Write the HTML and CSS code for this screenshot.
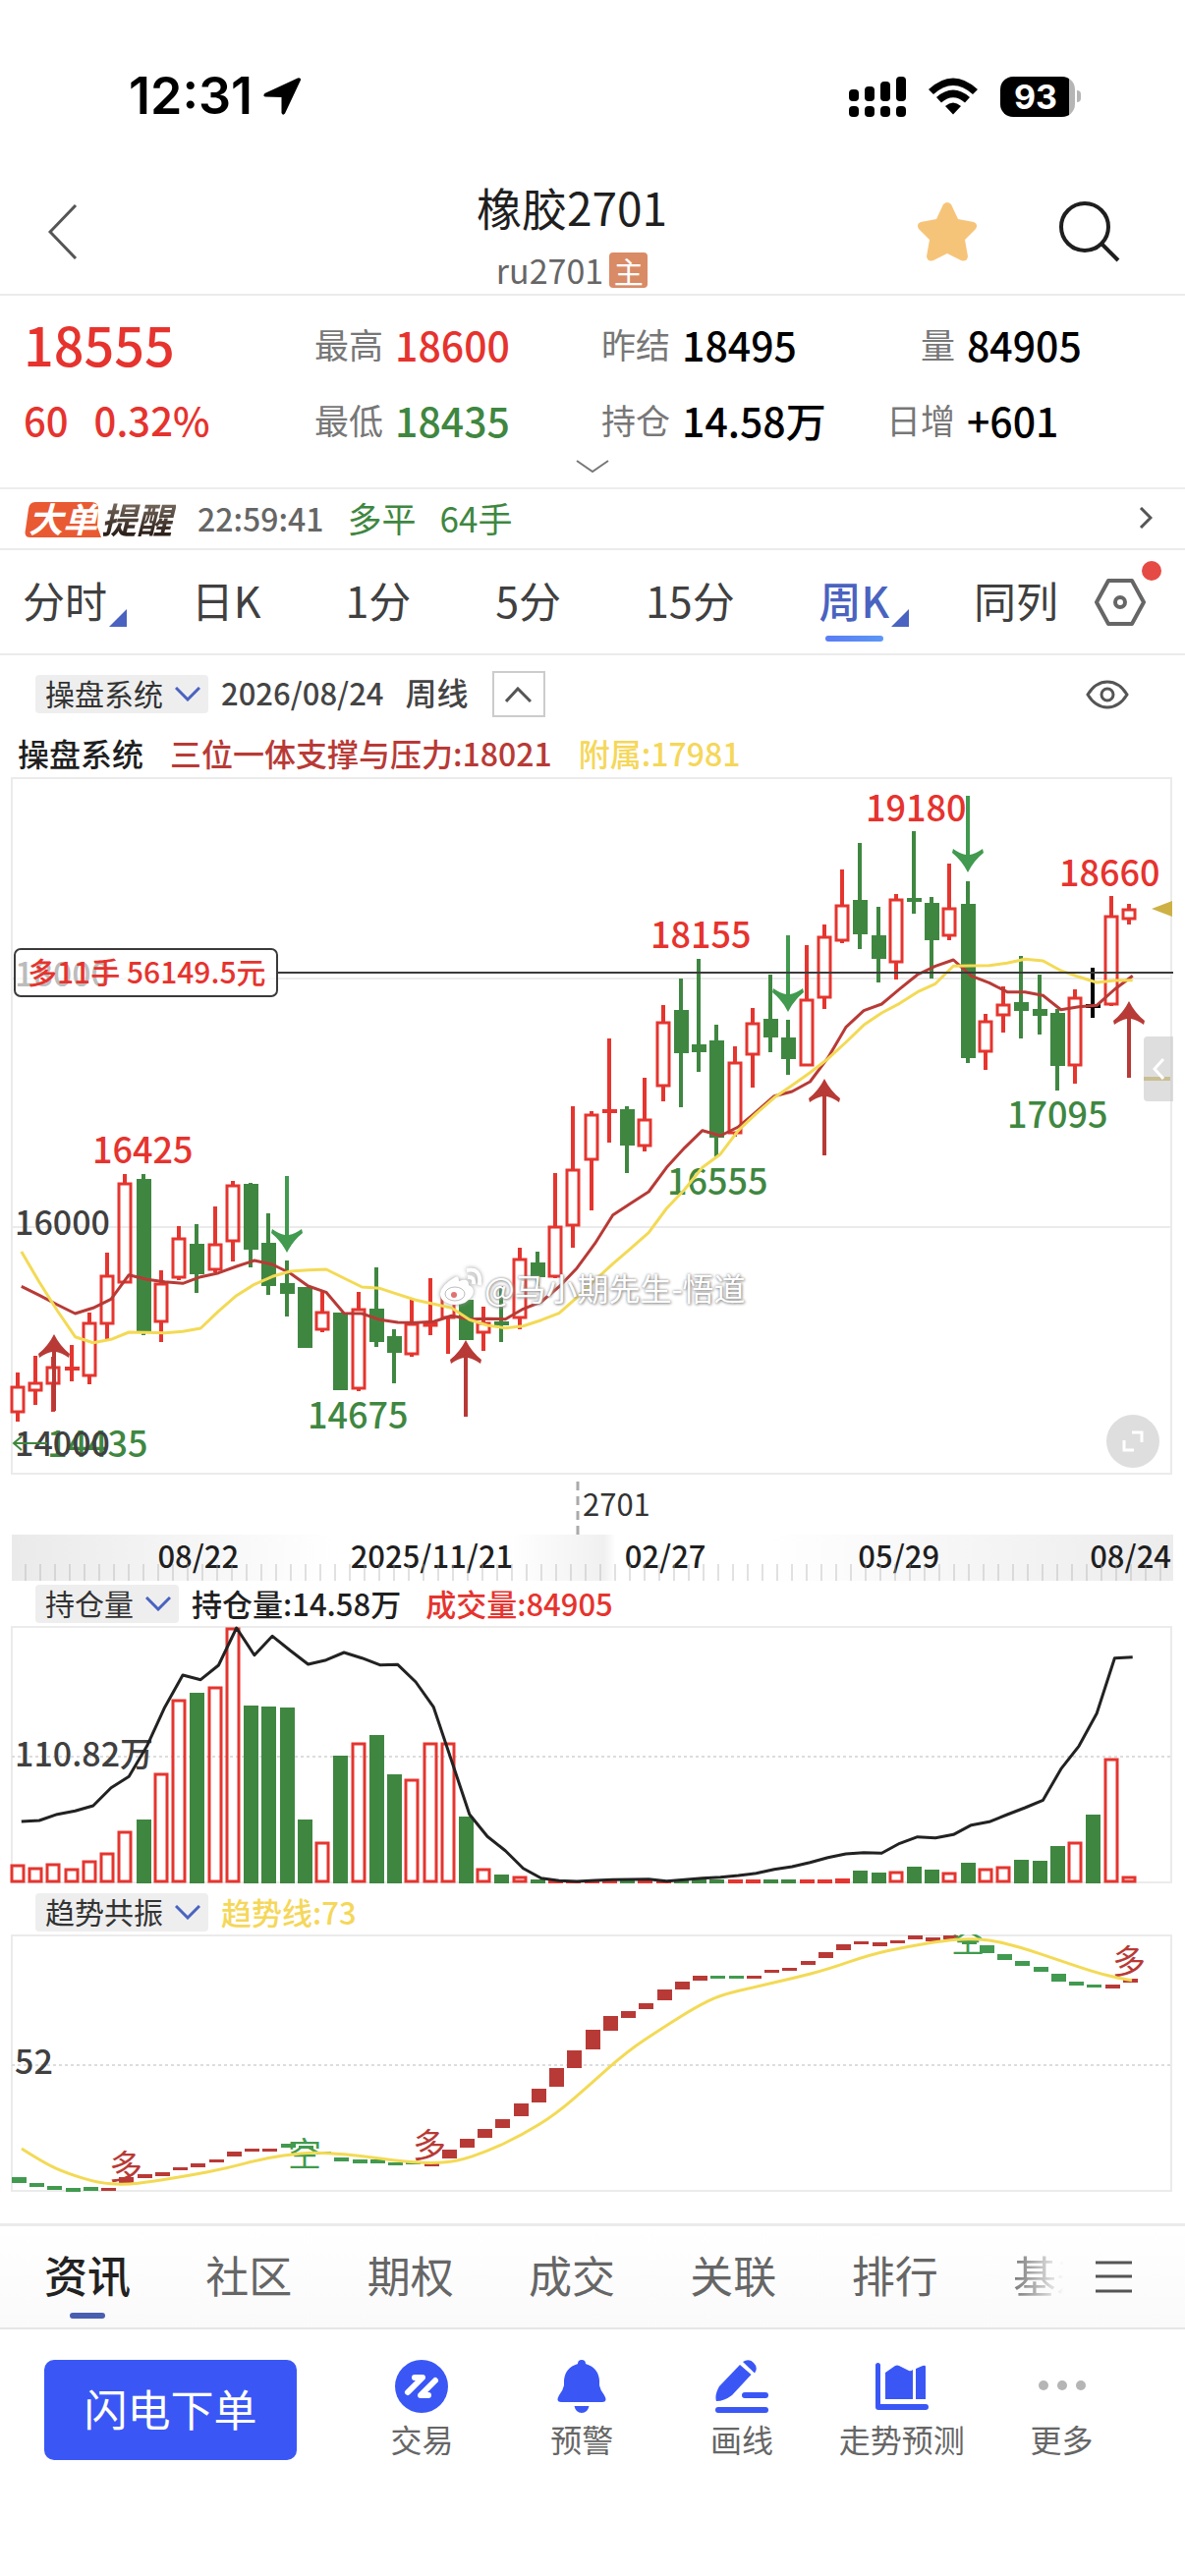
FILE: index.html
```html
<!DOCTYPE html>
<html lang="zh-CN">
<head>
<meta charset="utf-8">
<meta name="viewport" content="width=device-width, initial-scale=1">
<title>橡胶2701</title>
<link rel="stylesheet" href="styles.css">
</head>
<body>
<div class="status">
  <div class="status__left">
    <span class="status__time">12:31</span>
    <svg class="status__locate" width="40" height="40" viewBox="0 0 40 40"><path d="M38 1.500Q39.500 2 39 3.500L23 37.500Q21 40 19.500 37L19.500 21L3 20.500Q0 20 2.500 17L36 1.500Q37 1 38 1.500Z"/></svg>
  </div>
  <div class="status__right">
    <svg width="58" height="41" viewBox="0 0 58 41">
      <rect x="0" y="13" width="10" height="12" rx="4"/><rect x="16" y="10" width="10" height="15" rx="4"/><rect x="32" y="5" width="10" height="20" rx="4"/><rect x="48" y="0" width="10" height="25" rx="4"/>
      <rect x="0" y="30" width="10" height="11" rx="4"/><rect x="16" y="30" width="10" height="11" rx="4"/><rect x="32" y="30" width="10" height="11" rx="4"/><rect x="48" y="30" width="10" height="11" rx="4"/>
    </svg>
    <svg width="52" height="38" viewBox="0 0 52 38"><path d="M1 12Q26-11 51 12L46 17Q26-1 6 17Z"/><path d="M9 20Q26 5 43 20L38 25.500Q26 15 14 25.500Z"/><path d="M18 29Q26 22 34 29L26 37.500Z"/></svg>
    <div class="battery"><span class="battery__level">93</span></div>
  </div>
</div>

<header class="header">
  <button class="header__back" type="button" aria-label="返回"><svg width="30" height="56" viewBox="0 0 30 56"><path class="line" d="M28 1L2 28L28 55"/></svg></button>
  <div class="header__title">
    <h1 class="header__name">橡胶2701</h1>
    <p class="header__code">ru2701<span class="header__badge">主</span></p>
  </div>
  <div class="header__actions">
    <button type="button" aria-label="自选"><svg width="62" height="62" viewBox="0 0 62 62"><path class="star" d="M27 3Q31-1 35 3L42 18L58 21Q63 23 60 28L49 39L52 56Q51 62 45 60L31 53L17 60Q11 62 10 56L13 39L2 28Q-1 23 4 21L20 18Z"/></svg></button>
    <button type="button" aria-label="搜索"><svg width="63" height="62" viewBox="0 0 63 62"><g class="line line--dark"><circle cx="27" cy="26" r="24"/><path d="M44 43L61 60"/></g></svg></button>
  </div>
</header>

<section class="quote">
  <div class="quote__grid">
    <strong class="quote__price up">18555</strong>
    <div class="stat"><span>最高</span><b class="up">18600</b></div>
    <div class="stat"><span>昨结</span><b>18495</b></div>
    <div class="stat"><span class="stat__end">量</span><b>84905</b></div>
    <div class="quote__change up"><b>60</b><b>0.32%</b></div>
    <div class="stat"><span>最低</span><b class="down">18435</b></div>
    <div class="stat"><span>持仓</span><b>14.58万</b></div>
    <div class="stat"><span class="stat__end">日增</span><b>+601</b></div>
  </div>
  <button class="quote__more" type="button" aria-label="展开"><svg width="34" height="14" viewBox="0 0 34 14"><path class="line line--thin" d="M1 1L17 12L33 1"/></svg></button>
</section>

<a class="alert" href="#alert">
  <span class="alert__tag"><svg class="alert__shape" width="78" height="36" viewBox="0 0 78 36"><path d="M11 0H68Q75 0 75 7L74 25L78 36H6Q-1 36 1 28L4 7Q5 0 11 0Z"/></svg><em>大单</em></span>
  <em class="alert__name">提醒</em>
  <time class="alert__time">22:59:41</time>
  <span class="alert__text down">多平</span>
  <span class="alert__text down">64手</span>
  <svg class="alert__go" width="14" height="22" viewBox="0 0 14 22"><path class="line" d="M2 1L12 11L2 21"/></svg>
</a>

<div class="periods">
  <nav class="periods__nav">
    <a class="period period--menu" href="#time">分时</a>
    <a class="period" href="#day">日K</a>
    <a class="period" href="#m1">1分</a>
    <a class="period" href="#m5">5分</a>
    <a class="period" href="#m15">15分</a>
    <a class="period period--menu period--on" href="#week" aria-current="true">周K</a>
    <a class="period" href="#same">同列</a>
  </nav>
  <button class="periods__set" type="button" aria-label="设置"><svg width="52" height="48" viewBox="0 0 52 48"><g class="line line--mid"><path d="M14 2H38L50 24L38 46H14L2 24Z"/><circle cx="26" cy="24" r="5"/></g></svg><i class="dot"></i></button>
</div>

<main class="charts">
  <div class="toolbar">
    <label class="chip"><select aria-label="主图指标"><option>操盘系统</option></select><svg width="26" height="15" viewBox="0 0 26 15"><path d="M1 1L13 13L25 1"/></svg></label>
    <time class="toolbar__date">2026/08/24</time>
    <span class="toolbar__unit">周线</span>
    <button class="toolbar__fold" type="button" aria-label="收起"><svg width="27" height="16" viewBox="0 0 27 16"><path class="line" d="M1 15L13 2L26 15"/></svg></button>
    <button class="toolbar__eye" type="button" aria-label="显示"><svg width="44" height="30" viewBox="0 0 44 30"><g class="line"><path d="M2 15Q10 2 22 2T42 15Q34 28 22 28T2 15Z"/><circle cx="22" cy="15" r="6"/></g></svg></button>
  </div>
  <p class="legend"><span>操盘系统</span><span class="legend__ma">三位一体支撑与压力:18021</span><span class="yellow">附属:17981</span></p>
  <div class="main-chart">
    <svg id="kline" class="plot" viewBox="0 12 1206 771" role="img" aria-label="周K线"></svg>
    <p class="watermark"><svg width="44" height="40" viewBox="0 0 44 40"><path d="M17 10Q21 8 21 14Q31 10 31 18Q38 21 35 28Q30 38 16 38Q2 36 2 27Q3 18 17 10Z"/><path class="watermark__wave" d="M30 10Q37 9 36 17M29 3Q44 0 42 18"/><ellipse class="watermark__ring" cx="17" cy="27" rx="10" ry="7"/><circle class="watermark__eye" cx="16" cy="28" r="3"/></svg>@马小期先生-悟道</p>
    <button class="side-handle" type="button" aria-label="侧栏"><svg width="13" height="24" viewBox="0 0 13 24"><path d="M11 2L2 12L11 22"/></svg></button>
    <button class="expand" type="button" aria-label="全屏"><svg width="22" height="22" viewBox="0 0 22 22"><path d="M10 2H20V12M2 10V20H12"/></svg></button>
  </div>
  <div class="timeline"><div class="timeline__dates"><time>08/22</time><time>2025/11/21</time><time>02/27</time><time>05/29</time><time class="timeline__last">08/24</time></div></div>
  <div class="subhead">
    <label class="chip"><select aria-label="副图指标一"><option>持仓量</option></select><svg width="26" height="15" viewBox="0 0 26 15"><path d="M1 1L13 13L25 1"/></svg></label>
    <span class="subhead__text">持仓量:14.58万</span><span class="subhead__text subhead__text--vol up">成交量:84905</span>
  </div>
  <svg id="volume" class="plot" viewBox="0 0 1206 264" role="img" aria-label="持仓量"></svg>
  <div class="subhead subhead--trend">
    <label class="chip"><select aria-label="副图指标二"><option>趋势共振</option></select><svg width="26" height="15" viewBox="0 0 26 15"><path d="M1 1L13 13L25 1"/></svg></label>
    <span class="subhead__text yellow">趋势线:73</span>
  </div>
  <svg id="trend" class="plot" viewBox="0 0 1206 262" role="img" aria-label="趋势共振"></svg>
</main>

<div class="sections">
  <nav class="sections__nav">
    <a class="section section--on" href="#news" aria-current="true">资讯</a>
    <a class="section" href="#club">社区</a>
    <a class="section" href="#option">期权</a>
    <a class="section" href="#deal">成交</a>
    <a class="section" href="#link">关联</a>
    <a class="section" href="#rank">排行</a>
    <a class="section section--cut" href="#basis">基差</a>
  </nav>
  <button class="sections__menu" type="button" aria-label="全部栏目"><svg width="37" height="33" viewBox="0 0 37 33"><path d="M0 2H37M0 16H37M0 31H37"/></svg></button>
</div>

<footer class="actions">
  <button class="order" type="button">闪电下单</button>
  <nav class="actions__nav">
    <a class="action" href="#trade"><svg width="54" height="54" viewBox="0 0 54 54"><circle cx="27" cy="27" r="27"/><g class="action__cut"><path d="M20 18H28L13 33M34 36H26L41 21"/></g></svg>交易</a>
    <a class="action" href="#warn"><svg width="54" height="54" viewBox="0 0 54 54"><path d="M23 4Q23 0 27 0T31 4Q44 8 45 21V26Q46 31 50 36Q54 43 48 43H6Q0 43 4 36Q8 31 9 26V21Q10 8 23 4ZM19.500 47H34.500Q33 54 27 54T19.500 47Z"/></svg>预警</a>
    <a class="action" href="#draw"><svg width="54" height="54" viewBox="0 0 54 54"><path d="M25 5L36.500 15L17 36Q9 42 1 42Q-1 36 4 27ZM28 2Q34-2 39 3Q44 8 40 13.500Z"/><rect x="27" y="33" width="27" height="6" rx="3"/><rect y="48" width="54" height="6" rx="3"/></svg>画线</a>
    <a class="action" href="#forecast"><svg width="54" height="54" viewBox="0 0 54 54"><path d="M0 5.500Q0 3 2.500 3T5 5.500V45H51Q54 45 54 48T51 51H3Q0 51 0 48ZM10 13L20 6Q22 5 24 6L34 11Q36 12 38 10V40H10ZM41 9L48 6Q51 5 51 7V40H41Z"/></svg>走势预测</a>
    <a class="action action--more" href="#more"><svg width="54" height="54" viewBox="0 0 54 54"><circle cx="8" cy="26" r="5"/><circle cx="27" cy="26" r="5"/><circle cx="46" cy="26" r="5"/></svg>更多</a>
  </nav>
</footer>
<script src="charts.js"></script>
</body>
</html>
```
FILE: styles.css
```css
* { box-sizing: border-box; }
body {
  margin: 0;
  background: #fff;
  color: #1f1f1f;
  font-family: "Noto Sans CJK SC", "Noto Sans", sans-serif;
}
h1, p { margin: 0; font-weight: 400; }
b, strong { font-weight: 500; }
svg { display: block; flex: none; }
a { color: inherit; text-decoration: none; }
button { padding: 0; border: 0; background: none; font: inherit; color: inherit; }
.up { color: #e6332e; }
.down { color: #3f8741; }
.yellow { color: #f5d75a; }
.line { fill: none; stroke: #555; stroke-width: 3; }
.line--dark { stroke: #1f1f1f; stroke-width: 4; }
.line--mid { stroke: #666; stroke-width: 4; stroke-linejoin: round; }
.line--thin { stroke: #777; stroke-width: 2; }

/* status bar */
.status { display: flex; justify-content: space-between; padding: 68px 106px 0 131px; line-height: 60px; }
.status__left, .status__right { display: flex; align-items: center; }
.status__left { gap: 10px; }
.status__right { gap: 22px; }
.status__time { font-family: Inter, sans-serif; font-size: 52px; font-weight: 600; color: #000; }
.battery { position: relative; width: 76px; height: 41px; border-radius: 13px; background: linear-gradient(90deg, #000 70px, #b5b5b5 70px); margin-right: 6px; }
.battery::after { content: ""; position: absolute; left: 78px; top: 14px; width: 4px; height: 12px; border-radius: 0 4px 4px 0; background: #b5b5b5; }
.battery__level { display: block; width: 72px; text-align: center; font: 700 34px/41px Inter, sans-serif; color: #fff; }

/* header */
.header { display: grid; grid-template-columns: 1fr auto 1fr; align-items: center; padding: 44px 66px 0 24px; border-bottom: 2px solid #ebebeb; }
.header__back { justify-self: start; padding-left: 25px; }
.header__title { text-align: center; }
.header__name { padding-bottom: 6px; font-size: 46px; line-height: 76px; }
.header__code { display: flex; align-items: center; justify-content: center; gap: 6px; padding-bottom: 3px; font-size: 34px; line-height: 42px; color: #666; }
.header__badge { width: 39px; border-radius: 4px; background: #d98b66; color: #fff; font-size: 30px; line-height: 36px; }
.header__actions { display: flex; align-items: center; justify-self: end; gap: 82px; }
.star { fill: #f6c479; }

/* quote */
.quote { border-bottom: 2px solid #ededed; }
.quote__grid { display: grid; grid-template-columns: 296fr 292fr 290fr 304fr; row-gap: 11px; padding: 16px 0 0 24px; line-height: 66px; }
.quote__price { font-size: 54px; }
.quote__change { display: flex; gap: 26px; font-size: 40px; }
.stat { display: flex; gap: 12px; font-size: 41px; color: #000; }
.stat span { font-size: 35px; color: #777; }
.stat__end { width: 70px; text-align: right; }
.quote__more { display: flex; justify-content: center; width: 100%; padding: 8px 0 14px; }

/* large order alert */
.alert { display: flex; align-items: center; padding: 0 33px 2px 25px; line-height: 58px; border-bottom: 2px solid #ebebeb; font-size: 35px; }
.alert em { font-weight: 700; font-size: 36px; }
.alert__tag { position: relative; width: 78px; color: #fff; text-align: center; }
.alert__shape { position: absolute; left: 0; top: 13px; fill: #e95a32; }
.alert__tag em { position: relative; font-size: 35px; }
.alert__name { color: transparent; background: linear-gradient(#75685d 25%, #2a1e17 80%); background-clip: text; -webkit-background-clip: text; padding: 0 4px 0 0; }
.alert__time { margin-left: 22px; font-size: 32px; font-weight: 500; color: #666; }
.alert__text { margin-left: 24px; }
.alert__go { margin-left: auto; }

/* periods */
.periods { display: flex; align-items: center; padding: 0 40px 0 23px; border-bottom: 2px solid #ebebeb; font-size: 43px; line-height: 101px; color: #404040; }
.periods__nav { display: flex; flex: 1; justify-content: space-between; margin-right: 37px; padding-bottom: 4px; }
.period { position: relative; }
.period--menu::after { content: ""; position: absolute; left: 100%; bottom: 23px; margin-left: 2px; border-style: solid; border-width: 0 0 18px 18px; border-color: transparent transparent #4a63c0; }
.period--on { color: #4a63c0; font-weight: 500; }
.period--on::before { content: ""; position: absolute; left: 6px; bottom: 8px; width: 59px; height: 6px; border-radius: 3px; background: linear-gradient(90deg, #5b7cf5, #5b97f5); }
.periods__set { position: relative; }
.dot { position: absolute; right: -16px; top: -18px; width: 20px; height: 20px; border-radius: 50%; background: #e64a45; }

/* chart headings */
.toolbar { display: flex; align-items: center; padding: 16px 57px 2px 36px; line-height: 39px; }
.chip { position: relative; display: block; border-radius: 4px; background: #eee; }
.chip select { display: block; appearance: none; margin: 0; padding: 0 46px 3px 10px; border: 0; background: none; color: #333; font: 400 30px/36px "Noto Sans CJK SC", sans-serif; }
.chip svg { position: absolute; right: 8px; top: 12px; fill: none; stroke: #4a63c0; stroke-width: 3; pointer-events: none; }
.toolbar__date { margin-left: 13px; padding-bottom: 4px; font-size: 31px; font-weight: 500; color: #444; }
.toolbar__unit { margin-left: 22px; padding-bottom: 4px; font-size: 32px; font-weight: 500; color: #444; }
.toolbar__fold { display: grid; place-items: center; width: 54px; height: 47px; margin-left: 24px; border: 2px solid #ccc; }
.toolbar__eye { margin-left: auto; }
.legend { display: flex; gap: 27px; padding: 14px 18px 5px; font-size: 32px; font-weight: 500; line-height: 40px; }
.legend__ma { color: #b83a36; }
.subhead { display: flex; align-items: center; padding: 4px 36px 3px; }
.subhead--trend { padding-top: 8px; }
.subhead__text { margin-left: 13px; padding-bottom: 2px; font-size: 31px; font-weight: 500; line-height: 37px; }
.subhead__text--vol { margin-left: 25px; }

/* charts */
.charts { padding-bottom: 32px; }
.plot { width: 100%; height: auto; }
.main-chart { position: relative; }
.frame { fill: none; stroke: #ebebeb; stroke-width: 2; }
.grid { stroke: #ebebeb; stroke-width: 2; }
.grid--dot { stroke: #ddd; stroke-dasharray: 3 3; }
.position { stroke: #3a3a3a; stroke-width: 2; }
.position--box { fill: #fff; fill-opacity: .65; }
.wick { stroke-width: 4; fill: none; }
.hollow { stroke-width: 3; fill: none; }
.rise { stroke: #e5352f; }
.fall { stroke: #3f8741; }
.flat { stroke: #000; }
.solid { fill: #3f8741; }
.solid--flat { fill: #000; }
.solid--rise { fill: #e5352f; }
.curve { fill: none; stroke-width: 3; stroke-linejoin: round; }
.curve--ma { stroke: #b83a36; }
.curve--sub { stroke: #f3da55; }
.curve--oi { stroke: #222; }
.sell { fill: #419a4f; }
.buy { fill: #b83a36; }
.gold { fill: #cdb145; }
.axis { font-size: 34px; font-weight: 500; fill: #404040; }
.mark { font-size: 36px; font-weight: 500; }
.mark--up { fill: #e6332e; }
.mark--down { fill: #3f8741; }
.mark--hold { fill: #e6332e; font-size: 30px; }
.mark--month { fill: #333; font-size: 31px; font-weight: 400; }
.mark--sign { font-size: 34px; font-weight: 400; text-anchor: middle; }
.expiry { stroke: #aaa; stroke-width: 3; stroke-dasharray: 9 6; }
.back-arrow { fill: none; stroke: #3f8741; stroke-width: 2; }
.watermark { position: absolute; left: 37%; top: 495px; display: flex; align-items: center; gap: 3px; font-size: 32px; line-height: 48px; color: #fff; text-shadow: 0 0 3px #888, 1px 1px 3px #999; }
.watermark svg { fill: #fff; filter: drop-shadow(0 0 2px #999); }
.watermark .watermark__wave { fill: none; stroke: #fff; stroke-width: 4; }
.watermark__ring { stroke: #bbb; fill: #fff; }
.watermark__eye { fill: #e0736f; }
.side-handle { position: absolute; right: 12px; top: 264px; width: 30px; height: 66px; display: grid; place-items: center; border-radius: 4px 0 0 4px; background: rgba(200, 200, 200, .6); }
.side-handle svg { fill: none; stroke: #fff; stroke-width: 3; }
.expand { position: absolute; right: 26px; bottom: 68px; display: grid; place-items: center; width: 54px; height: 54px; border-radius: 50%; background: #dedede; }
.expand svg { fill: none; stroke: #fff; stroke-width: 3; }
.timeline { position: relative; margin: 0 12px; background: linear-gradient(90deg, #eaeaea, #fff 28%, #fff 43%, #f0f0f0 51%, #fff 52%, #fff 65%, #ececec); }
.timeline::after { content: ""; position: absolute; inset: 30px 0 0; background: repeating-linear-gradient(90deg, transparent 0 13px, rgba(170, 170, 170, .35) 13px 15px); }
.timeline__dates { display: grid; grid-template-columns: 237fr 237fr 237fr 237fr 158fr; margin-left: 71px; padding: 0 2px 6px 0; text-align: center; font-size: 31px; font-weight: 500; line-height: 41px; }
.timeline__last { text-align: right; }

/* section tabs */
.sections { display: flex; align-items: center; padding: 0 54px 0 45px; border-top: 3px solid #ebebeb; border-bottom: 2px solid #e6e6e6; background: linear-gradient(#fff, #fafafa); font-size: 44px; line-height: 99px; color: #666; }
.sections__nav { display: flex; flex: 1; justify-content: space-between; margin-right: 32px; padding-bottom: 4px; overflow: hidden; white-space: nowrap; }
.section { position: relative; }
.section--on { color: #222; font-weight: 500; }
.section--on::after { content: ""; position: absolute; left: 26px; bottom: 5px; width: 36px; height: 6px; border-radius: 3px; background: #4a5fb0; }
.section--cut { width: 52px; overflow: hidden; color: transparent; background: linear-gradient(90deg, #777, rgba(200, 200, 200, 0)); background-clip: text; -webkit-background-clip: text; }
.sections__menu path { stroke: #555; stroke-width: 3; }

/* bottom actions */
.actions { display: flex; gap: 46px; padding: 31px 44px 119px 45px; }
.order { width: 257px; padding-bottom: 4px; border-radius: 10px; background: #3a57f6; color: #fff; font-size: 44px; line-height: 98px; }
.actions__nav { display: grid; grid-template-columns: repeat(5, 1fr); flex: 1; }
.action { display: flex; flex-direction: column; align-items: center; gap: 5px; font-size: 32px; line-height: 43px; color: #666; white-space: nowrap; }
.action svg { fill: #3a57f6; }
.action .action__cut { fill: none; stroke: #fff; stroke-width: 6; stroke-linecap: round; stroke-linejoin: round; }
.action--more svg { fill: #b5b5b5; }
```
FILE: charts.js
```js
const NS = 'http://www.w3.org/2000/svg';
const STEP = 18.24;
const centre = i => Math.round(18 + i * STEP);

function add(svg, name, cls, attrs, text) {
  const el = document.createElementNS(NS, name);
  if (cls) el.setAttribute('class', cls);
  for (const key in attrs) el.setAttribute(key, attrs[key]);
  if (text) el.textContent = text;
  svg.appendChild(el);
  return el;
}
const line = (svg, cls, x1, y1, x2, y2) => add(svg, 'line', cls, { x1, y1, x2, y2 });
const curve = (svg, cls, values, scale) => add(svg, 'polyline', cls, {
  points: values.map((v, i) => `${(21.8 + i * STEP).toFixed(1)},${scale(v).toFixed(1)}`).join(' ')
});

/* candles: colour, high, body top, body bottom, low (levels, three per pixel) */
const candles = `r 1855 1895 1978 2003|r 1803 1885 1910 1953|r 1805 1835 1890 1973|r 1770 1836 1842 1880|r 1670 1702 1865 1890|r 1488 1558 1706 1753|r 1248 1274 1580 1580|g 1248 1264 1733 1740|r 1543 1580 1700 1760|r 1407 1443 1565 1572|g 1401 1461 1553 1611|r 1347 1461 1543 1548|r 1268 1282 1455 1514|g 1275 1278 1480 1533|g 1367 1458 1589 1617|g 1512 1582 1613 1683|g 1593 1593 1780 1780|r 1608 1667 1724 1730|g 1671 1671 1907 1907|r 1608 1659 1904 1910|g 1533 1659 1760 1777|g 1723 1743 1793 1887|r 1633 1705 1799 1805|r 1567 1700 1714 1739|r 1590 1620 1688 1796|g 1631 1631 1756 1756|r 1653 1700 1733 1788|g 1590 1698 1706 1761|r 1474 1507 1688 1721|g 1486 1517 1563 1590|r 1245 1407 1562 1565|r 1041 1233 1408 1473|r 1055 1065 1205 1358|r 835 1050 1058 1151|g 1041 1050 1160 1244|r 954 1080 1163 1178|r 732 782 980 1025|g 651 748 878 1043|g 591 851 875 937|g 792 840 1136 1198|r 857 907 1126 1135|r 741 785 886 983|g 640 775 830 875|g 778 830 898 945|r 548 713 917 917|r 486 521 711 744|r 318 427 538 543|g 237 411 517 560|g 432 519 590 663|r 392 408 602 654|g 201 406 418 452|g 402 420 534 652|r 300 435 523 533|g 353 424 893 910|r 758 779 877 930|r 674 729 766 815|g 583 722 749 833|g 639 743 766 823|g 745 755 917 993|r 684 709 919 972|k 618 729 735 771|r 399 458 732 736|r 423 438 470 486`
  .split('|').map(row => row.split(' '));
const support = [1591,1618,1647,1674,1657,1630,1556,1570,1577,1582,1562,1550,1530,1512,1524,1551,1590,1609,1673,1674,1693,1701,1702,1699,1681,1691,1690,1691,1660,1638,1592,1535,1460,1373,1337,1302,1228,1168,1115,1131,1104,1058,1010,996,966,893,800,749,729,683,639,613,594,643,664,692,692,703,746,737,733,684,643];
const extra = [1485,1578,1665,1745,1763,1753,1731,1732,1733,1729,1719,1667,1619,1585,1561,1545,1541,1539,1566,1593,1597,1615,1633,1645,1657,1693,1710,1718,1712,1694,1673,1625,1572,1522,1475,1427,1353,1295,1228,1187,1115,1063,1015,977,938,896,846,793,756,727,692,667,613,612,611,604,592,597,627,646,663,657,656];

function drawKline() {
  const svg = document.getElementById('kline');
  const y = v => Math.round(v / 3);
  add(svg, 'rect', 'frame', { x: 12, y: 13, width: 1180, height: 708 });
  line(svg, 'grid', 12, 217, 1192, 217);
  line(svg, 'grid', 12, 470, 1192, 470);
  candles.forEach(([c, high, top, bottom, low], i) => {
    const x = centre(i), t = y(top), b = y(bottom);
    const tone = c === 'r' ? 'rise' : c === 'g' ? 'fall' : 'flat';
    if (y(high) < t) line(svg, 'wick ' + tone, x, y(high), x, t + 1);
    if (y(low) > b) line(svg, 'wick ' + tone, x, b - 1, x, y(low));
    if (c === 'r' && b - t > 3) {
      add(svg, 'rect', 'hollow rise', { x: x - 6, y: t + 1, width: 12, height: b - t - 2 });
    } else {
      const fill = c === 'r' ? ' solid--rise' : c === 'k' ? ' solid--flat' : '';
      add(svg, 'rect', 'solid' + fill, { x: x - 7, y: t, width: 15, height: Math.max(b - t, 4) });
    }
  });
  [[94,405,'up','16425'],[313,675,'down','14675'],[48,704,'down','14435'],[662,186,'up','18155'],[881,57,'up','19180'],[1078,123,'up','18660'],[1025,369,'down','17095'],[679,437,'down','16555']]
    .forEach(([x, base, tone, text]) => add(svg, 'text', 'mark mark--' + tone, { x, y: base }, text));
  curve(svg, 'curve curve--ma', support, v => v / 3);
  curve(svg, 'curve curve--sub', extra, v => v / 3);
  const arrow = 'M0 0Q6 12 16 20L15 24Q8 19 2 18V78H-2V18Q-8 19 -15 24L-16 20Q-6 12 0 0Z';
  [[55,579],[474,585],[839,319],[1149,240]].forEach(([x, tip]) =>
    add(svg, 'path', 'buy', { d: arrow, transform: `translate(${x} ${tip})` }));
  [[292,496],[802,251],[985,109]].forEach(([x, tip]) =>
    add(svg, 'path', 'sell', { d: arrow, transform: `translate(${x} ${tip}) rotate(180)` }));
  add(svg, 'text', 'axis', { x: 15, y: 225 }, '18000');
  add(svg, 'text', 'axis', { x: 15, y: 478 }, '16000');
  add(svg, 'text', 'axis', { x: 15, y: 703 }, '14000');
  add(svg, 'path', 'back-arrow', { d: 'M22 683L14 690L22 697M14 690H48' });
  line(svg, 'position', 282, 211, 1194, 211);
  add(svg, 'rect', 'position position--box', { x: 15, y: 187, width: 267, height: 48, rx: 6 });
  add(svg, 'text', 'mark mark--hold', { x: 28, y: 222 }, '多11手 56149.5元');
  add(svg, 'path', 'gold', { d: 'M1172 146L1193 138V154Z' });
  add(svg, 'path', 'gold', { d: 'M1164 317H1191V321H1164Z' });
  line(svg, 'expiry', 588, 729, 588, 783);
  add(svg, 'text', 'mark mark--month', { x: 593, y: 764 }, '2701');
}

/* volume bars: colour and top level; open interest: level */
const volumes = 'r1197 r1205 r1194 r1208 r1185 r1162 r1094 g1060 r918 r692 g671 r655 r474 g712 g714 g716 g1060 r1127 g865 r825 g801 g921 r936 r824 r824 g1050 r1208 g1228 r1232 g1243 r1244 r1244 r1244 r1244 g1243 r1244 r1244 g1244 g1243 g1243 r1243 r1243 g1242 g1242 r1243 r1243 r1240 g1216 g1221 r1219 g1204 g1211 r1222 g1191 r1208 r1203 g1181 g1186 g1140 r1127 g1045 r874 r1233'.split(' ');
const interest = [1065,1062,1043,1033,1017,962,928,835,716,618,632,588,474,557,499,543,585,572,549,566,587,586,639,716,880,1043,1111,1154,1208,1238,1246,1248,1245,1243,1242,1241,1247,1243,1238,1235,1230,1223,1211,1203,1190,1175,1164,1160,1162,1132,1112,1115,1105,1076,1066,1044,1023,1000,905,835,735,566,563];

function drawVolume() {
  const svg = document.getElementById('volume');
  const y = v => v / 3 - 156;
  add(svg, 'rect', 'frame', { x: 12, y: 1, width: 1180, height: 260 });
  line(svg, 'grid grid--dot', 12, 133, 1192, 133);
  add(svg, 'text', 'axis', { x: 15, y: 143 }, '110.82万');
  volumes.forEach((v, i) => {
    const x = centre(i), top = Math.round(y(+v.slice(1)));
    if (v[0] === 'r' && top < 256) {
      add(svg, 'rect', 'hollow rise', { x: x - 6, y: top + 1, width: 12, height: 259 - top });
    } else {
      add(svg, 'rect', 'solid' + (v[0] === 'r' ? ' solid--rise' : ''), { x: x - 7, y: top, width: 15, height: 262 - top });
    }
  });
  curve(svg, 'curve curve--oi', interest, y);
}

/* trend blocks: colour, top level, bottom level */
const blocks = 'g890-908 g910-921 g919-930 g924-936 g921-933 r924-934 r890-908 r882-893 r877-888 r861-870 r849-860 r836-846 r813-827 r804-813 r804-812 g789-801 g795-805 g812-823 g831-844 g838-849 g838-849 g846-855 g844-852 r849-859 r806-833 r774-800 r744-771 r715-741 r666-706 r622-662 r557-614 r503-557 r441-500 r400-444 r384-404 r360-379 r318-350 r295-317 r276-291 g275-285 g275-285 r276-286 r257-267 r252-262 r232-243 r204-223 r181-198 r171-181 r174-186 r168-178 r154-164 r159-170 r153-165 g170-180 g183-206 g210-228 g231-245 g250-263 g271-293 g294-306 g303-312 r304-315 r286-297'.split(' ');
const trendLine = [[22,804],[46,850],[69,880],[100,909],[127,914],[154,905],[192,886],[231,864],[269,833],[308,817],[331,816],[369,827],[408,842],[437,849],[465,843],[496,812],[531,763],[565,700],[600,610],[638,507],[677,430],[708,372],[733,335],[769,310],[808,283],[842,257],[885,212],[923,187],[962,168],[985,163],[1008,167],[1038,188],[1077,228],[1115,266],[1138,283],[1152,290]];

function drawTrend() {
  const svg = document.getElementById('trend');
  const y = v => v / 3 - 50;
  add(svg, 'rect', 'frame', { x: 12, y: 1, width: 1180, height: 260 });
  line(svg, 'grid grid--dot', 12, 133, 1192, 133);
  add(svg, 'text', 'axis', { x: 15, y: 142 }, '52');
  blocks.forEach((b, i) => {
    const [top, bottom] = b.slice(1).split('-').map(v => Math.round(y(+v)));
    add(svg, 'rect', b[0] === 'r' ? 'buy' : 'sell', { x: centre(i) - 6, y: top, width: 15, height: bottom - top });
  });
  [[128,249,'buy','多'],[310,236,'sell','空'],[437,227,'buy','多'],[985,18,'sell','空'],[1149,40,'buy','多']]
    .forEach(([x, base, tone, text]) => add(svg, 'text', 'mark--sign ' + tone, { x, y: base }, text));
  /* smooth curve through the midpoints */
  let d = `M${trendLine[0][0]} ${y(trendLine[0][1])}`;
  for (let i = 1; i < trendLine.length - 1; i++) {
    const [x, v] = trendLine[i], [nx, nv] = trendLine[i + 1];
    d += `Q${x} ${y(v)} ${(x + nx) / 2} ${y((v + nv) / 2)}`;
  }
  const end = trendLine[trendLine.length - 1];
  add(svg, 'path', 'curve curve--sub', { d: d + `L${end[0]} ${y(end[1])}` });
}

drawKline();
drawVolume();
drawTrend();
```
